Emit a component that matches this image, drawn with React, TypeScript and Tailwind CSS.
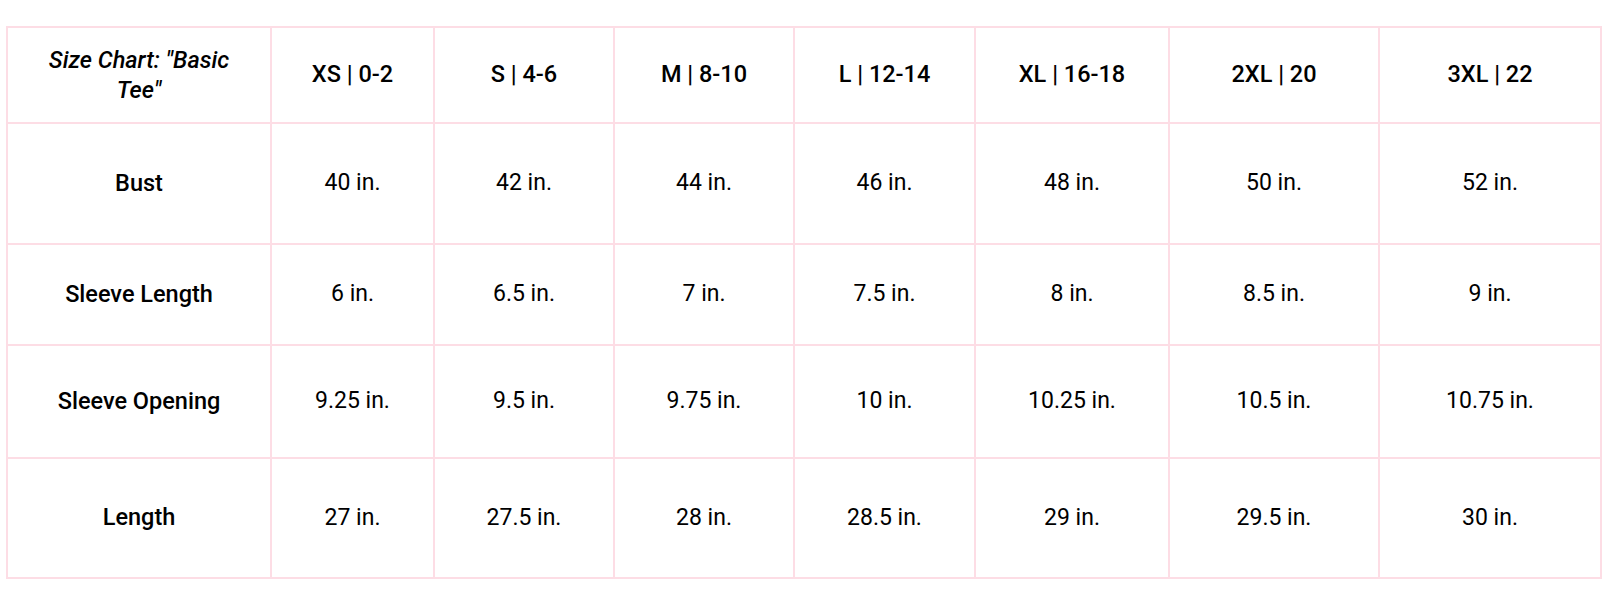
import React from 'react';

const sizes = ['XS | 0-2', 'S | 4-6', 'M | 8-10', 'L | 12-14', 'XL | 16-18', '2XL | 20', '3XL | 22'];

const rows: { label: string; values: string[] }[] = [
  { label: 'Bust', values: ['40 in.', '42 in.', '44 in.', '46 in.', '48 in.', '50 in.', '52 in.'] },
  { label: 'Sleeve Length', values: ['6 in.', '6.5 in.', '7 in.', '7.5 in.', '8 in.', '8.5 in.', '9 in.'] },
  { label: 'Sleeve Opening', values: ['9.25 in.', '9.5 in.', '9.75 in.', '10 in.', '10.25 in.', '10.5 in.', '10.75 in.'] },
  { label: 'Length', values: ['27 in.', '27.5 in.', '28 in.', '28.5 in.', '29 in.', '29.5 in.', '30 in.'] },
];

const cell = 'bg-white flex items-center justify-center text-center';

const App: React.FC = () => {
  return (
    <div className="min-h-[598px] bg-white pl-[6px] pt-[26px] font-['Roboto',sans-serif] text-[23px] text-black">
      <div className="inline-grid grid-cols-[262px_161px_178px_178px_179px_192px_208px_220px] grid-rows-[94px_119px_99px_111px_118px] gap-[2px] p-[2px] bg-[#fddde5]">
        {/* Header row */}
        <div className={`${cell} px-[40px] italic font-medium text-[23.5px] leading-[30px]`}>
          Size Chart: "Basic Tee"
        </div>
        {sizes.map(s => (
          <div key={s} className={`${cell} font-medium text-[23.5px]`}>{s}</div>
        ))}

        {/* Measurement rows */}
        {rows.map(r => (
          <React.Fragment key={r.label}>
            <div className={`${cell} font-medium text-[23.5px]`}>{r.label}</div>
            {r.values.map((v, i) => (
              <div key={i} className={cell}>{v}</div>
            ))}
          </React.Fragment>
        ))}
      </div>
    </div>
  );
};

export default App;
